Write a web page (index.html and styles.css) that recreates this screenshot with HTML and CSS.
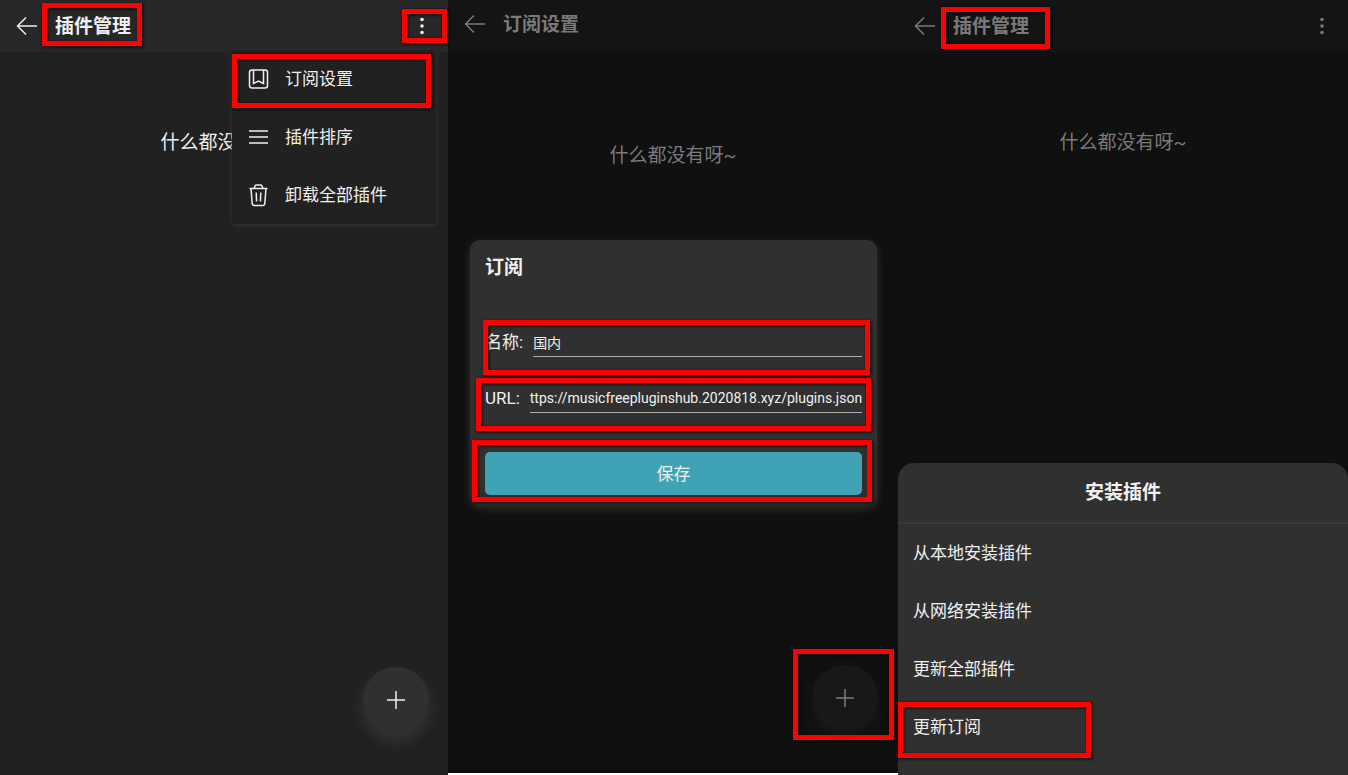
FILE: index.html
```html
<!DOCTYPE html>
<html lang="zh-CN">
<head>
    <meta charset="UTF-8">
    <meta name="viewport" content="width=device-width, initial-scale=1.0">
    <title>插件管理</title>
    <link rel="stylesheet" href="styles.css">
</head>
<body>
    <main class="screens">
        <section class="screen">
            <header class="appbar">
                <button class="icon-btn" aria-label="返回">
                    <svg width="22" height="20" viewBox="0 0 22 20"><path d="M21 10H1.5M10 1.5L1.5 10l8.500 8.500"/></svg>
                </button>
                <h1 class="title">插件管理<span class="mark mark-title"></span></h1>
                <button class="icon-btn more" aria-label="更多">
                    <svg class="dots" width="6" height="18" viewBox="0 0 6 18"><circle cx="3" cy="2.500" r="1.800"/><circle cx="3" cy="9" r="1.800"/><circle cx="3" cy="15.500" r="1.800"/></svg>
                    <span class="mark mark-more"></span>
                </button>
            </header>
            <p class="empty">什么都没有呀~</p>
            <nav class="menu">
                <button class="menu-item">
                    <svg width="21" height="22" viewBox="0 0 21 22"><rect x="1.500" y="2" width="18" height="18" rx="2.500"/><path d="M5.500 2v13.500l5-2.500 5 2.500V2"/></svg>
                    订阅设置
                    <span class="mark mark-menu"></span>
                </button>
                <button class="menu-item">
                    <svg width="21" height="22" viewBox="0 0 21 22"><path d="M1 5h19M1 11h19M1 17h19"/></svg>
                    插件排序
                </button>
                <button class="menu-item">
                    <svg width="21" height="24" viewBox="0 0 21 24"><path d="M1.500 5.500h18M6 5.500l1-2.500q.4-1 1.500-1h4q1.100 0 1.500 1l1 2.500M3 5.500l1.200 15q.2 2 2 2h8.600q1.800 0 2-2l1.200-15M8.200 9.500l.4 9M12.800 9.500l-.4 9"/></svg>
                    卸载全部插件
                </button>
            </nav>
            <button class="fab" aria-label="添加">
                <svg width="20" height="20" viewBox="0 0 20 20"><path d="M10 1v18M1 10h18"/></svg>
            </button>
        </section>

        <section class="screen dim short">
            <header class="appbar">
                <button class="icon-btn" aria-label="返回">
                    <svg width="22" height="20" viewBox="0 0 22 20"><path d="M21 10H1.5M10 1.5L1.5 10l8.500 8.500"/></svg>
                </button>
                <h1 class="title">订阅设置</h1>
            </header>
            <p class="empty">什么都没有呀~</p>
            <form class="dialog">
                <h2 class="title">订阅</h2>
                <div class="fields">
                    <div class="field">
                        <label for="name">名称:</label>
                        <input id="name" type="text" value="国内">
                        <span class="mark mark-name"></span>
                    </div>
                    <div class="field">
                        <label for="url">URL:</label>
                        <input id="url" type="text" value="ttps://musicfreepluginshub.2020818.xyz/plugins.json">
                        <span class="mark mark-url"></span>
                    </div>
                </div>
                <button class="save" type="button">保存<span class="mark mark-save"></span></button>
            </form>
            <button class="fab" aria-label="添加">
                <svg width="20" height="20" viewBox="0 0 20 20"><path d="M10 1v18M1 10h18"/></svg>
                <span class="mark mark-fab"></span>
            </button>
        </section>

        <section class="screen dim">
            <header class="appbar">
                <button class="icon-btn" aria-label="返回">
                    <svg width="22" height="20" viewBox="0 0 22 20"><path d="M21 10H1.5M10 1.5L1.5 10l8.500 8.500"/></svg>
                </button>
                <h1 class="title">插件管理<span class="mark mark-title-wide"></span></h1>
                <button class="icon-btn more" aria-label="更多">
                    <svg class="dots" width="6" height="18" viewBox="0 0 6 18"><circle cx="3" cy="2.500" r="1.800"/><circle cx="3" cy="9" r="1.800"/><circle cx="3" cy="15.500" r="1.800"/></svg>
                </button>
            </header>
            <p class="empty">什么都没有呀~</p>
            <div class="sheet">
                <h2 class="title sheet-title">安装插件</h2>
                <button class="sheet-item">从本地安装插件</button>
                <button class="sheet-item">从网络安装插件</button>
                <button class="sheet-item">更新全部插件</button>
                <button class="sheet-item">更新订阅<span class="mark mark-sheet"></span></button>
            </div>
        </section>
    </main>
</body>
</html>
```
FILE: styles.css
```css
* {
    box-sizing: border-box;
}

body {
    margin: 0;
    background: #fff;
    font-family: Roboto, "Noto Sans CJK SC", sans-serif;
    font-size: 17px;
    line-height: 24px;
}

button, input {
    font: inherit;
    color: inherit;
    background: none;
    border: none;
    padding: 0;
    margin: 0;
}

svg {
    display: block;
    flex: none;
    fill: none;
    stroke: currentColor;
    stroke-width: 1.5;
}

.dots {
    fill: currentColor;
    stroke: none;
}

.screens {
    display: grid;
    grid-template-columns: 448fr 450fr 450fr;
    min-height: 100vh;
}

.screen {
    position: relative;
    background: #212121;
    color: #f0f0f0;
}

.dim {
    background: #101010;
    color: #7a7a7a;
}

.short {
    margin-bottom: 2px;
}

/* top bar */
.appbar {
    display: flex;
    align-items: center;
    height: 52px;
    padding: 0 16px;
    background: #272727;
}

.dim .appbar {
    background: #141414;
}

.short .appbar {
    height: 48px;
    box-shadow: 0 3px #141414;
}

.title {
    position: relative;
    margin: 0;
    padding-top: 2px;
    font-size: 19px;
    font-weight: bold;
}

.appbar .title {
    margin-left: 17px;
}

.icon-btn {
    position: relative;
}

.more {
    margin-left: auto;
    padding: 0 7px 0 6px;
}

.empty {
    margin: 79px 0 0;
    text-align: center;
    font-size: 19px;
}

.short .empty {
    margin-top: 96px;
}

/* drop-down menu */
.menu {
    position: absolute;
    top: 50px;
    right: 12px;
    width: 204px;
    background: #212121;
    border-radius: 4px;
    box-shadow: 0 1px 4px #383838;
}

.menu-item {
    position: relative;
    display: flex;
    align-items: center;
    gap: 16px;
    width: 100%;
    height: 58px;
    padding-left: 16px;
}

/* floating button */
.fab {
    position: absolute;
    right: 19px;
    bottom: 42px;
    display: flex;
    align-items: center;
    justify-content: center;
    width: 66px;
    height: 66px;
    border-radius: 50%;
    background: #303030;
    box-shadow: 0 8px 16px #363636;
}

.dim .fab {
    right: 20px;
    background: #181818;
    box-shadow: 0 8px 16px #181818;
}

/* subscription dialog */
.dialog {
    position: absolute;
    top: 240px;
    left: 22px;
    right: 21px;
    padding: 14px 15px 10px;
    border-radius: 10px;
    background: #303030;
    color: #f0f0f0;
    box-shadow: 0 3px 8px #333;
}

.fields {
    margin: 34px 0 26px;
}

.field {
    position: relative;
    display: flex;
    align-items: center;
    gap: 10px;
    height: 56px;
}

.field input {
    flex: 1;
    min-width: 0;
    height: 30px;
    font-size: 14px;
    border-bottom: 1px solid #aaa;
    outline: none;
}

.save {
    position: relative;
    display: block;
    width: 100%;
    height: 43px;
    border-radius: 5px;
    background: #3fa3b5;
}

/* bottom sheet */
.sheet {
    position: absolute;
    left: 0;
    right: 0;
    bottom: 0;
    padding-bottom: 19px;
    border-radius: 16px 16px 0 0;
    background: #303030;
    color: #f0f0f0;
}

.sheet-title {
    padding: 18px 0 17px;
    border-bottom: 2px solid #3a3a3a;
    text-align: center;
}

.sheet-item {
    position: relative;
    display: block;
    width: 100%;
    height: 58px;
    padding-left: 15px;
    text-align: left;
}

/* red step markers */
.mark {
    position: absolute;
    z-index: 1;
    border: 5px solid #f00;
    box-shadow: 1px 1px 3px #000, inset 1px 1px 3px #000;
    pointer-events: none;
}

.mark-title {
    inset: -10px -11px -7px -13px;
}

.mark-title-wide {
    inset: -6px -21px -10px -12px;
}

.mark-more {
    inset: -8px -15px -8px -11px;
}

.mark-menu {
    inset: 4px 5px 0 0;
}

.mark-name {
    inset: 6px -8px -5px -2px;
}

.mark-url {
    inset: 8px -9px -5px -9px;
}

.mark-save {
    inset: -12px -10px -7px -13px;
}

.mark-fab {
    inset: -16px -16px -9px -19px;
}

.mark-sheet {
    inset: 4px auto -2px 0;
    width: 193px;
}
```
